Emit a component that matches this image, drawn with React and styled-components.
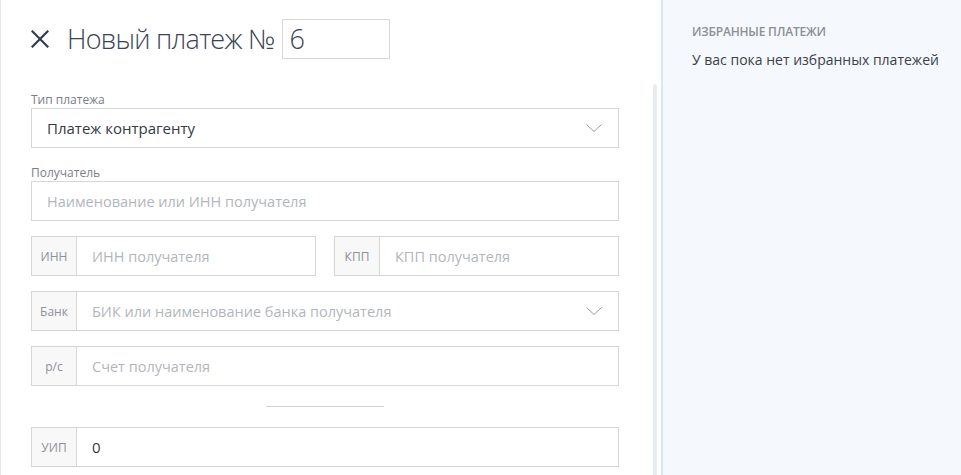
import styled, { createGlobalStyle } from 'styled-components';

const GlobalStyle = createGlobalStyle`
  html, body {
    margin: 0;
    padding: 0;
    height: 475px;
    overflow: hidden;
    background: #ffffff;
    font-family: "Open Sans", "Noto Sans", sans-serif;
  }
`

const Chevron = () => (
  <svg width="16" height="8" viewBox="0 0 16 8">
    <path d="M0.5 0.5 L8 7.5 L15.5 0.5" fill="none" stroke="#9a9a9a" strokeWidth="1" />
  </svg>
)

const CloseIcon = () => (
  <svg width="18" height="18" viewBox="0 0 18 18">
    <path d="M1.5 1.5 L16.5 16.5 M16.5 1.5 L1.5 16.5" stroke="#333d4a" strokeWidth="2.2" strokeLinecap="square" />
  </svg>
)

function PrefixInput({ prefix, text, filled }) {
  return (
    <Box>
      <Prefix>{prefix}</Prefix>
      <BoxText $filled={filled}>{text}</BoxText>
    </Box>
  )
}

function App() {
  return (
    <Page>
      <GlobalStyle />
      <Main>
        <Header>
          <CloseButton><CloseIcon /></CloseButton>
          <Title>Новый платеж №</Title>
          <NumberBox>6</NumberBox>
        </Header>

        <Form>
          <Label>Тип платежа</Label>
          <Box>
            <BoxText $filled>Платеж контрагенту</BoxText>
            <Arrow><Chevron /></Arrow>
          </Box>

          <Label $top={16}>Получатель</Label>
          <Box>
            <BoxText>Наименование или ИНН получателя</BoxText>
          </Box>

          <Pair>
            <PrefixInput prefix="ИНН" text="ИНН получателя" />
            <PrefixInput prefix="КПП" text="КПП получателя" />
          </Pair>

          <Row>
            <Box>
              <Prefix>Банк</Prefix>
              <BoxText>БИК или наименование банка получателя</BoxText>
              <Arrow><Chevron /></Arrow>
            </Box>
          </Row>

          <Row>
            <PrefixInput prefix="р/с" text="Счет получателя" />
          </Row>

          <Divider />

          <PrefixInput prefix="УИП" text="0" filled />
        </Form>

        <ScrollThumb />
      </Main>

      <Aside>
        <AsideTitle>Избранные платежи</AsideTitle>
        <AsideText>У вас пока нет избранных платежей</AsideText>
      </Aside>
    </Page>
  )
}

const Page = styled.div`
  display: flex;
  width: 961px;
  height: 475px;
  overflow: hidden;
`
const Main = styled.div`
  position: relative;
  width: 661px;
  flex: none;
  box-sizing: border-box;
  padding: 19px 0 0 30px;
  border-left: 1px solid #e2e7ef;
`
const Header = styled.div`
  display: flex;
  align-items: center;
  height: 40px;
`
const CloseButton = styled.span`
  display: flex;
  width: 18px;
  height: 18px;
  margin-right: 18px;
  cursor: pointer;
`
const Title = styled.h1`
  margin: 0 7px 0 0;
  font-family: "Open Sans Light", "Open Sans", sans-serif;
  font-size: 27px;
  font-weight: 300;
  color: #3a4452;
  line-height: 40px;
  letter-spacing: -0.7px;
`
const NumberBox = styled.div`
  box-sizing: border-box;
  width: 108px;
  height: 40px;
  border: 1px solid #d8d8d8;
  padding-left: 7px;
  font-family: "Open Sans Light", "Open Sans", sans-serif;
  font-size: 27px;
  font-weight: 300;
  color: #3a4452;
  line-height: 37px;
`
const Form = styled.div`
  display: flex;
  flex-direction: column;
  width: 588px;
  margin-top: 32px;
`
const Label = styled.div`
  font-size: 12px;
  line-height: 17px;
  color: #7a7e86;
  margin-top: ${p => p.$top || 0}px;
`
const Box = styled.div`
  display: flex;
  align-items: center;
  flex: 1 0 auto;
  box-sizing: border-box;
  height: 40px;
  border: 1px solid #d6d6d6;
  background: #fff;
`
const Prefix = styled.div`
  display: flex;
  align-items: center;
  justify-content: center;
  width: 44px;
  height: 100%;
  flex: none;
  background: #f8f8f8;
  border-right: 1px solid #d6d6d6;
  font-size: 12px;
  color: #8d9198;
`
const BoxText = styled.span`
  flex: 1;
  padding-left: 15px;
  font-size: ${p => (p.$filled ? '15px' : '14.5px')};
  color: ${p => (p.$filled ? '#333a44' : '#b2b6bc')};
  white-space: nowrap;
`
const Arrow = styled.span`
  display: flex;
  margin-right: 16px;
`
const Pair = styled.div`
  display: grid;
  grid-template-columns: 1fr 1fr;
  column-gap: 18px;
  margin-top: 15px;
`
const Row = styled.div`
  display: flex;
  margin-top: 15px;
`
const Divider = styled.div`
  align-self: center;
  width: 118px;
  height: 1px;
  background: #cfd3d9;
  margin: 20px 0 20px;
`
const ScrollThumb = styled.div`
  position: absolute;
  right: 4px;
  top: 84px;
  bottom: 0;
  width: 4px;
  border-radius: 2px 2px 0 0;
  background: #e8ecf0;
`
const Aside = styled.div`
  flex: 1;
  box-sizing: border-box;
  padding: 23px 0 0 29px;
  background: #f5f9fd;
  border-left: 2px solid #d6e6f4;
`
const AsideTitle = styled.div`
  font-size: 12px;
  font-weight: 600;
  text-transform: uppercase;
  color: #8b8f97;
  line-height: 18px;
  letter-spacing: -0.2px;
`
const AsideText = styled.div`
  margin-top: 9px;
  font-size: 14px;
  color: #3a3f48;
  line-height: 20px;
`

export default App;
